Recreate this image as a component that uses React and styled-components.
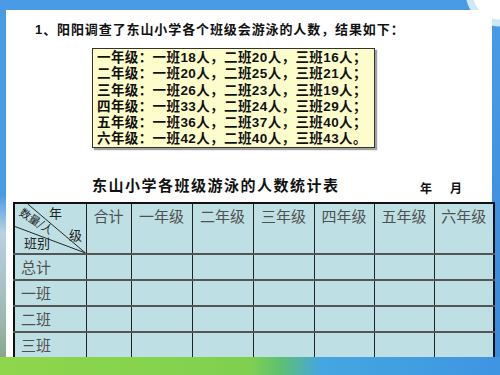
import React from 'react';
import styled, { createGlobalStyle } from 'styled-components';

const Global = createGlobalStyle`
  html, body { margin: 0; padding: 0; }
  body {
    width: 500px;
    height: 375px;
    overflow: hidden;
    font-family: "Noto Sans CJK SC", sans-serif;
  }
`;

const Page = styled.div`
  width: 500px;
  height: 375px;
  display: flex;
  flex-direction: column;
  background:
    radial-gradient(circle at 500px -8px, #ffffff 0 27px, #cde8f8 28px 34px, transparent 35px),
    linear-gradient(to bottom, #4a9be6 0%, #4a9be6 52%, #b8d2e2 62%, #9db8b0 85%, #7fa07a 100%) 0 0 / 6px 100% no-repeat,
    linear-gradient(to bottom, #4a9be6 0%, #3f90e0 60%, #3a8ade 100%);
`;

const Slide = styled.div`
  margin: 10px 8px 0 6px;
  height: 347px;
  background: #ffffff;
  display: flex;
  flex-direction: column;
  padding-top: 12px;
  box-sizing: border-box;
`;

const Question = styled.div`
  margin-left: 29px;
  height: 16px;
  font-family: "Liberation Sans", "Noto Sans CJK SC", sans-serif;
  font-size: 13px;
  font-weight: 700;
  letter-spacing: 0.9px;
  line-height: 16px;
  color: #111;
  white-space: nowrap;
`;

const DataBox = styled.div`
  margin: 10px 0 0 86px;
  width: 283px;
  height: 100px;
  flex-shrink: 0;
  box-sizing: border-box;
  border: 1px solid #333;
  background: #fdfdcc;
  box-shadow: 2px 2px 1px #a0a0a0;
  padding: 1px 0 0 4px;
  display: flex;
  flex-direction: column;
`;

const DataLine = styled.div`
  font-family: "Liberation Sans", "Noto Sans CJK SC", sans-serif;
  font-size: 13.5px;
  font-weight: 700;
  letter-spacing: 0.4px;
  line-height: 16.3px;
  color: #111;
  white-space: nowrap;
`;

const TitleRow = styled.div`
  margin-top: 27px;
  height: 20px;
  display: flex;
  justify-content: space-between;
  align-items: flex-end;
  padding: 0 30px 0 86px;
`;

const Title = styled.div`
  font-size: 15px;
  font-weight: 700;
  letter-spacing: 1.5px;
  line-height: 20px;
  color: #111;
`;

const DateLabel = styled.div`
  display: flex;
  gap: 18px;
  font-size: 12px;
  font-weight: 700;
  line-height: 14px;
  color: #111;
`;

const Table = styled.table`
  margin: 7px 0 0 7px;
  width: 480px;
  height: 155px;
  border-collapse: collapse;
  table-layout: fixed;
  border: 2px solid #111;
  background: #bee0e4;
`;

const HeadRow = styled.tr`
  height: 51px;
`;

const HeadCell = styled.td`
  padding: 3px 0 0;
  border: 1px solid #222;
  vertical-align: top;
  text-align: center;
  font-size: 15px;
  line-height: 18px;
  color: #505050;
  white-space: nowrap;
  overflow: hidden;
`;

const DiagCell = styled.td`
  position: relative;
  padding: 0;
  border: 1px solid #222;
  overflow: hidden;
`;

const DiagSvg = styled.svg`
  position: absolute;
  left: 0;
  top: 0;
  width: 100%;
  height: 100%;
`;

const DiagText = styled.span`
  position: absolute;
  left: ${p => p.$x}px;
  top: ${p => p.$y}px;
  font-size: ${p => p.$size || 12}px;
  line-height: 1;
  color: #222;
  white-space: nowrap;
  transform: rotate(${p => p.$rot || 0}deg);
  transform-origin: left top;
`;

const BodyRow = styled.tr`
  height: 26px;
  border-top: 2px solid #555;
`;

const LabelCell = styled.td`
  padding: 0 0 0 6px;
  border-left: 1px solid #222;
  border-right: 1px solid #222;
  font-size: 15px;
  line-height: 16px;
  color: #505050;
  white-space: nowrap;
  overflow: hidden;
`;

const EmptyCell = styled.td`
  padding: 0;
  border-left: 1px solid #222;
  border-right: 1px solid #222;
`;

const Bottom = styled.div`
  flex: 1;
  background: linear-gradient(to right, #8fd64c 0%, #7fd050 50%, #5fc070 56%, #45a6e0 64%, #3f95e2 100%);
`;

const dataLines = [
  '一年级：一班18人，二班20人，三班16人；',
  '二年级：一班20人，二班25人，三班21人；',
  '三年级：一班26人，二班23人，三班19人；',
  '四年级：一班33人，二班24人，三班29人；',
  '五年级：一班36人，二班37人，三班40人；',
  '六年级：一班42人，二班40人，三班43人。',
];

const headers = ['合计', '一年级', '二年级', '三年级', '四年级', '五年级', '六年级'];
const widths = [72, 45, 61, 61, 61, 60, 60, 60];
const rows = ['总计', '一班', '二班', '三班'];

export default function App() {
  return (
    <Page>
      <Global />
      <Slide>
        <Question>1、阳阳调查了东山小学各个班级会游泳的人数，结果如下：</Question>
        <DataBox>
          {dataLines.map(l => (
            <DataLine key={l}>{l}</DataLine>
          ))}
        </DataBox>
        <TitleRow>
          <Title>东山小学各班级游泳的人数统计表</Title>
          <DateLabel>
            <span>年</span>
            <span>月</span>
          </DateLabel>
        </TitleRow>
        <Table>
          <colgroup>
            {widths.map((w, i) => (
              <col key={i} style={{ width: w }} />
            ))}
          </colgroup>
          <tbody>
            <HeadRow>
              <DiagCell>
                <DiagSvg viewBox="0 0 72 50" preserveAspectRatio="none">
                  <line x1="13" y1="0" x2="72" y2="50" stroke="#222" strokeWidth="1" />
                  <line x1="0" y1="23" x2="72" y2="50" stroke="#222" strokeWidth="1" />
                </DiagSvg>
                <DiagText $x={34} $y={2} $size={13}>年</DiagText>
                <DiagText $x={54} $y={24} $size={13}>级</DiagText>
                <DiagText $x={9} $y={32} $size={13}>班别</DiagText>
                <DiagText $x={9} $y={2} $size={11} $rot={33}>数量/人</DiagText>
              </DiagCell>
              {headers.map(h => (
                <HeadCell key={h}>{h}</HeadCell>
              ))}
            </HeadRow>
            {rows.map(r => (
              <BodyRow key={r}>
                <LabelCell>{r}</LabelCell>
                {headers.map(h => (
                  <EmptyCell key={h} />
                ))}
              </BodyRow>
            ))}
          </tbody>
        </Table>
      </Slide>
      <Bottom />
    </Page>
  );
}
